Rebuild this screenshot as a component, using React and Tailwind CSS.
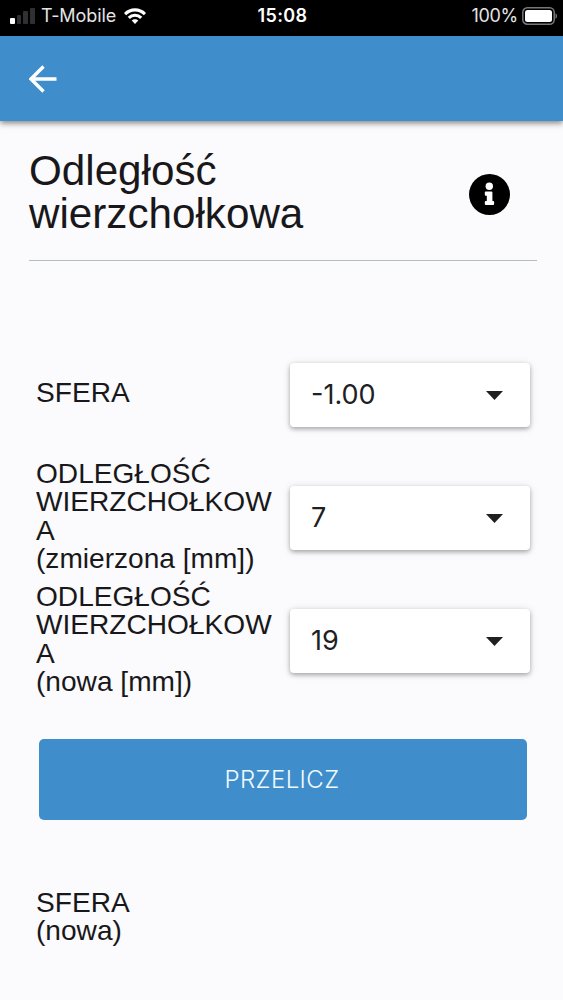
import React from 'react'

const fields = [
    { lines: ['SFERA'], value: '-1.00' },
    { lines: ['ODLEGŁOŚĆ', 'WIERZCHOŁKOWA', '(zmierzona [mm])'], value: '7' },
    { lines: ['ODLEGŁOŚĆ', 'WIERZCHOŁKOWA', '(nowa [mm])'], value: '19' },
]

function StatusBar() {
    return (
        <div className="grid h-9 grid-cols-[1fr_auto_1fr] items-center bg-black pl-[10px] pr-[6px] pb-[5px] font-['Inter',sans-serif] text-[18px] leading-none text-[#e4e4e6]">
            <div className="flex items-center">
                <div className="flex h-[16px] w-[25px] items-end gap-[2px]">
                    <span className="h-[6px] w-[5px] rounded-[1px] bg-white" />
                    <span className="h-[9px] w-[4px] rounded-[1px] bg-[#303033]" />
                    <span className="h-[13px] w-[5px] rounded-[1px] bg-[#303033]" />
                    <span className="h-[16px] w-[5px] rounded-[1px] bg-[#303033]" />
                </div>
                <span className="ml-[6px] w-[75px] whitespace-nowrap tracking-[-0.1px]">T-Mobile</span>
                <svg className="ml-[8px] h-[16px] w-[22px]" viewBox="0 0 22 16" fill="none" stroke="#fff" strokeWidth="3.1">
                    <path d="M1 6.1C6.6 .4 15.4 .4 21 6.1" />
                    <path d="M4.8 9.9C8.3 6.4 13.7 6.4 17.2 9.9" />
                    <path d="M11 16l-3.3-3.4c1.9-1.9 4.7-1.9 6.6 0z" fill="#fff" stroke="none" />
                </svg>
            </div>
            <span className="mr-[2px] font-semibold tracking-[0.4px] text-white">15:08</span>
            <div className="flex items-center justify-end">
                <span className="tracking-[-0.3px]">100%</span>
                <svg className="ml-[4px] h-[18px] w-[35px]" viewBox="0 0 35 18">
                    <rect x="0.8" y="0.8" width="31.4" height="16.4" rx="4.5" fill="none" stroke="#78787b" strokeWidth="1.5" />
                    <rect x="3" y="3" width="27" height="12" rx="2.5" fill="#fff" />
                    <path d="M33.5 6.2c2 .6 2 5 0 5.6z" fill="#78787b" />
                </svg>
            </div>
        </div>
    )
}

function InfoIcon() {
    return (
        <svg className="mt-[25px] mr-[27px] h-[41px] w-[41px]" viewBox="0 0 41 41">
            <circle cx="20.5" cy="20.5" r="20.5" fill="#000" />
            <circle cx="20.3" cy="12.3" r="3.7" fill="#fff" />
            <path
                d="M16.8 17.6h5.6a1 1 0 0 1 1 1v8.3h.7a1 1 0 0 1 1 1v2.2a1 1 0 0 1-1 1h-7.3a1 1 0 0 1-1-1v-2.2a1 1 0 0 1 1-1h1v-5.1h-1a1 1 0 0 1-1-1v-2.2a1 1 0 0 1 1-1z"
                fill="#fff"
            />
        </svg>
    )
}

function SelectBox({ value }) {
    return (
        <button className="flex h-[64px] w-[240px] shrink-0 items-center justify-between rounded-[4px] bg-white pl-[21px] pr-[27px] font-['Inter',sans-serif] text-[27px] tracking-[0px] text-[#202023] shadow-[0_2px_4px_rgba(0,0,0,0.28),0_1px_8px_rgba(0,0,0,0.12)]">
            <span>{value}</span>
            <svg className="mt-[1px] h-[9px] w-[17px]" viewBox="0 0 17 9">
                <path d="M0 0h17L8.5 9z" fill="#202023" />
            </svg>
        </button>
    )
}

function FieldLabel({ lines }) {
    return (
        <div className="w-[238px] break-words text-[28.1px] leading-[28.3px]">
            {lines.map((line) => (
                <div key={line}>{line}</div>
            ))}
        </div>
    )
}

function App() {
    return (
        <div className="min-h-[1000px] w-[563px] overflow-hidden bg-[#fbfafd] font-['Liberation_Sans',sans-serif] text-[#18181a]">
            <StatusBar />
            <header className="flex h-[85px] items-center bg-[#3f8dcb] pl-[29px] shadow-[0_2px_6px_rgba(0,0,0,0.5)]">
                <svg className="h-[28px] w-[29px]" viewBox="0 0 29 28" fill="none" stroke="#fff" strokeWidth="3.4">
                    <path d="M27.5 14H2.5M14.5 1.5L2 14l12.5 12.5" />
                </svg>
            </header>

            <main>
                <div className="ml-[29px] mr-[26px] flex h-[140px] justify-between border-b-[1.5px] border-[#b4bfc2] pt-[28px]">
                    <h1 className="mt-[1px] w-[300px] text-[42.2px] leading-[42.5px]">Odległość wierzchołkowa</h1>
                    <InfoIcon />
                </div>

                <div className="mt-[72.5px] flex flex-col pl-[36px] pr-[33px]">
                    {fields.map((field) => (
                        <div key={field.value} className="flex h-[123px] items-center justify-between">
                            <div className="-mt-[3px]">
                                <FieldLabel lines={field.lines} />
                            </div>
                            <SelectBox value={field.value} />
                        </div>
                    ))}
                </div>

                <button className="mt-[36.5px] ml-[39px] flex h-[81px] w-[488px] items-center justify-center rounded-[5px] bg-[#3f8dcb] pr-[2px] font-['Inter',sans-serif] text-[24px] font-light tracking-[0.4px] text-[#effaff]">
                    PRZELICZ
                </button>

                <div className="mt-[69px] pl-[36px]">
                    <FieldLabel lines={['SFERA', '(nowa)']} />
                </div>
            </main>
        </div>
    )
}

export default App
